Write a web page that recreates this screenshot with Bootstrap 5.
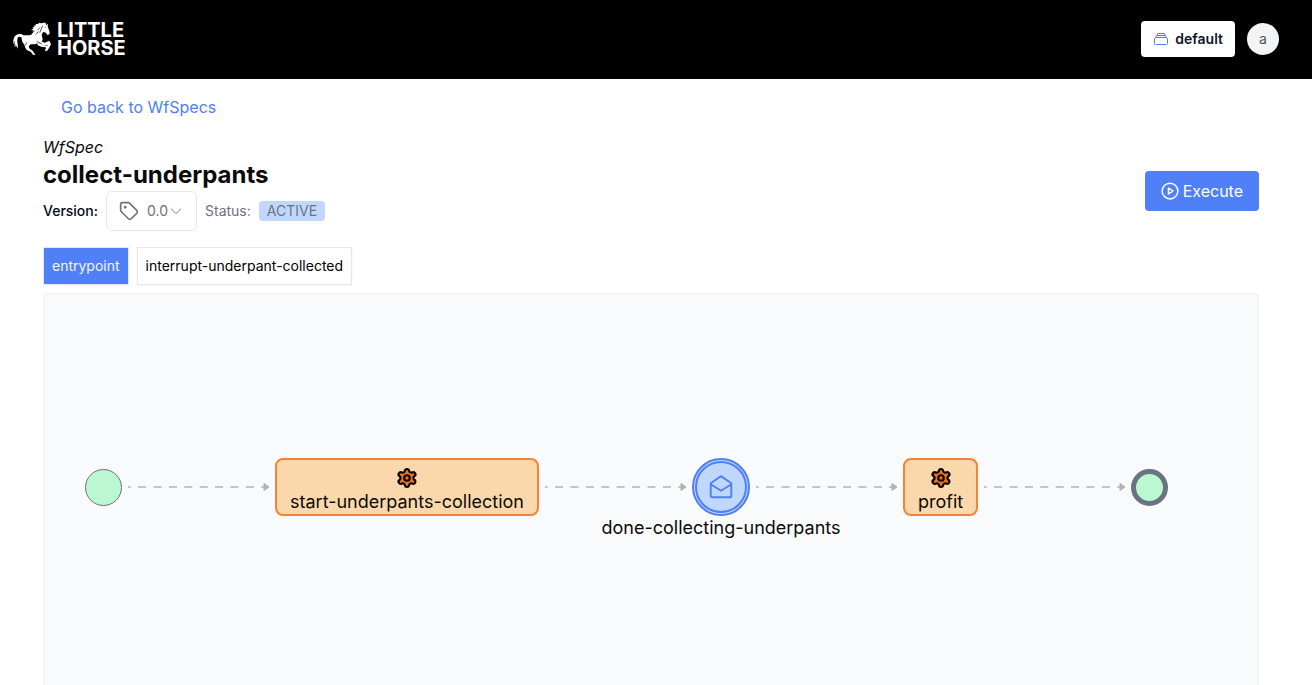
<!DOCTYPE html>
<html lang="en">
<head>
<meta charset="utf-8">
<meta name="viewport" content="width=device-width, initial-scale=1">
<title>collect-underpants | LittleHorse</title>
<link href="https://cdn.jsdelivr.net/npm/bootstrap@5.3.0/dist/css/bootstrap.min.css" rel="stylesheet">
<style>
  body { font-family: Inter, "Liberation Sans", sans-serif; font-size: 16px; line-height: 24px; color: #0a0a0a; }
  svg { flex: none; display: block; }
  .topbar { background: #000; padding: 20px 33px 21px 10px; }
  .brand { color: #fff; font-size: 20px; line-height: 18px; font-weight: 700; gap: 3px; }
  .brand:hover { color: #fff; }
  .account { gap: 12px; }
  .tenant { background: #fff; color: #0f172a; font-size: 14px; line-height: 20px; font-weight: 600; padding: 8px 12px; border: 0; border-radius: 4px; gap: 6px; }
  .tenant:hover { background: #f3f4f6; }
  .avatar { width: 32px; height: 32px; background: #f3f4f6; color: #4b5563; font-size: 14px; padding: 0; border: 0; }
  .page { padding: 16px 53px 0 43px; }
  .back-link { color: #4f80f7; padding-left: 18px; }
  .page-title { font-size: 24px; line-height: 32px; font-weight: 700; margin: 0; }
  .meta { font-size: 14px; line-height: 20px; color: #6b7280; }
  .version-label { color: #020817; font-weight: 500; }
  .version-box { height: 40px; border: 1px solid #e5e7eb; border-radius: 6px; padding: 0 12px; }
  .version-box select { appearance: none; border: 0; background: transparent; color: #6b7280; padding: 0; margin-left: 8px; font-size: 14px; outline: 0; }
  .status-tag { background: #c0d8ff; border-radius: 4px; padding: 0 8px; }
  .execute { background: #4f80f7; color: #fff; border: 0; border-radius: 4px; padding: 8px 16px; margin-bottom: 20px; gap: 4px; font-size: 16px; line-height: 24px; }
  .execute:hover { background: #3b6fe8; color: #fff; }
  .thread-tab { background: #fff; color: #000; border: 1px solid #e5e7eb; border-radius: 0; padding: 8px; font-size: 14px; line-height: 20px; box-shadow: 0 1px 2px #0000000d; }
  .thread-tab.active { background: #4f80f7; color: #f3f4f6; }
  .canvas { background: #f9fafc; border: 2px solid #f1f5f9; border-bottom: 0; border-radius: 4px 4px 0 0; padding: 163px 0 0 40px; }
  .flow-circle { width: 37px; height: 37px; background: #bbf7d0; border: 1px solid #6b7280; }
  .flow-circle.final { border-width: 5px; }
  .task { height: 58px; background: #fbd8ac; border: 2px solid #f5823a; border-radius: 8px; padding: 7px 13px 0; font-size: 18px; line-height: 22px; gap: 2px; }
  .event { width: 58px; height: 58px; background: #c0d8ff; border: 5px double #4f80f7; }
  .event-label { position: absolute; top: 100%; left: 50%; transform: translateX(-50%); margin-top: 5px; font-size: 18px; line-height: 24px; white-space: nowrap; }
</style>
</head>
<body class="vh-100 overflow-hidden d-flex flex-column">
<header class="topbar d-flex justify-content-between align-items-center">
  <a href="#" class="brand d-flex align-items-center text-decoration-none">
    <svg width="44" height="38" viewBox="0 0 132 114" fill="#fff" aria-hidden="true">
      <path d="M107 8L108 16L114 11L113 19L119 37L118 43L112 45L108 38L99 36L95 45L98 57L96 65L104 68L118 62L123 73L116 86L108 91L106 87L111 82L113 74L106 76L96 74L86 69L74 73L62 73L56 79L59 86L68 92L74 101L77 105L69 104L62 95L50 90L46 83L43 74L37 65L34 52C27 48 22 51 22 59C21 67 25 74 23 86C20 81 18 77 17 72C17 77 17 80 15 82C13 74 14 68 14 62C12 65 12 70 10 73C9 55 13 46 24 43C31 41 36 42 40 46C50 45 57 47 64 44C66 39 71 36 75 32L67 35L71 30L63 31L71 25L66 24L74 20L70 18L79 15L76 12L86 12L85 8L94 10L101 8z"/>
      <path d="M84 68l17 8 13 1 0 14-8 3-1-4 4-3-2-5-13-2-12-5z"/>
      <path d="M90 22l-8 9M98 17l-9 21M85 35l-8 9M50 67l-4 9M80 64l15 7M104 21l3 2" fill="none" stroke="#000" stroke-width="2"/>
    </svg>
    <span>LITTLE<br>HORSE</span>
  </a>
  <div class="account d-flex align-items-center">
    <button type="button" class="tenant btn d-flex align-items-center">
      <svg width="16" height="16" viewBox="0 0 16 16" fill="none" stroke="#4f80f7" stroke-width="1" aria-hidden="true"><path d="M2.500 6.500h11l1 1.500v4.500q0 1-1 1h-11q-1 0-1-1V8zM3 6.500V5q0-.5.5-.5h9q.5 0 .5.5v1.500M4.500 4.500V3q0-.5.5-.5h6q.5 0 .5.5v1.500"/></svg>
      default
    </button>
    <button type="button" class="avatar rounded-circle">a</button>
  </div>
</header>

<main class="page flex-grow-1 d-flex flex-column">
  <div class="mb-3"><a href="#" class="back-link text-decoration-none">Go back to WfSpecs</a></div>

  <div class="d-flex justify-content-between align-items-end mb-3">
    <div>
      <div class="fst-italic">WfSpec</div>
      <h1 class="page-title">collect-underpants</h1>
      <div class="meta d-flex align-items-center gap-2">
        <label class="version-label" for="version">Version:</label>
        <div class="version-box d-flex align-items-center">
          <svg width="20" height="20" viewBox="0 0 24 24" fill="none" stroke="#6b7280" stroke-width="2" stroke-linejoin="round" aria-hidden="true"><path d="M12.600 2.600A2 2 0 0 0 11.200 2H4a2 2 0 0 0-2 2v7.200a2 2 0 0 0 .6 1.400l8.700 8.700a2.400 2.400 0 0 0 3.400 0l6.600-6.600a2.400 2.400 0 0 0 0-3.400z"/><circle cx="7.500" cy="7.500" r=".7" fill="#6b7280"/></svg>
          <select id="version"><option>0.0</option></select>
          <svg width="16" height="16" viewBox="0 0 24 24" fill="none" stroke="#b5b8bf" stroke-width="2" stroke-linecap="round" stroke-linejoin="round" aria-hidden="true"><path d="M5 9l7 7 7-7"/></svg>
        </div>
        <span>Status:</span>
        <span class="status-tag">ACTIVE</span>
      </div>
    </div>
    <button type="button" class="execute btn d-flex align-items-center">
      <svg width="18" height="18" viewBox="0 0 24 24" fill="none" stroke="currentColor" stroke-width="2" stroke-linejoin="round" aria-hidden="true"><circle cx="12" cy="12" r="10.500"/><path d="M10 8l6 4-6 4z"/></svg>
      Execute
    </button>
  </div>

  <div class="d-flex gap-2 mb-2">
    <button type="button" class="thread-tab active">entrypoint</button>
    <button type="button" class="thread-tab">interrupt-underpant-collected</button>
  </div>

  <svg width="0" height="0" class="position-absolute" aria-hidden="true">
    <symbol id="edge" viewBox="0 0 153 10"><path d="M6 5H142" stroke="#b1b1b7" stroke-width="1.500" stroke-dasharray="8 7.400" stroke-dashoffset="5.300"/><path d="M142 1.500L147 5l-5 3.500z" fill="#b1b1b7" stroke="#b1b1b7" stroke-linejoin="round"/></symbol>
    <symbol id="gear" viewBox="0 0 24 24"><path d="M9.700 4.100a2.340 2.340 0 0 1 4.600 0 2.340 2.340 0 0 0 3.300 1.900 2.340 2.340 0 0 1 2.400 4.100 2.340 2.340 0 0 0 0 3.800 2.340 2.340 0 0 1-2.400 4.100 2.340 2.340 0 0 0-3.300 1.900 2.340 2.340 0 0 1-4.600 0 2.340 2.340 0 0 0-3.300-1.900 2.340 2.340 0 0 1-2.400-4.100 2.340 2.340 0 0 0 0-3.800 2.340 2.340 0 0 1 2.400-4.100 2.340 2.340 0 0 0 3.300-1.900z" fill="#f97316" stroke="#000" stroke-width="2.400" stroke-linejoin="round"/><circle cx="12" cy="12" r="3" fill="#f97316" stroke="#000" stroke-width="2.400"/></symbol>
  </svg>

  <section class="canvas flex-grow-1" aria-label="Workflow diagram">
    <div class="d-flex align-items-center">
      <div class="flow-circle rounded-circle flex-shrink-0"></div>
      <svg width="153" height="10"><use href="#edge"/></svg>
      <div class="task d-flex flex-column align-items-center flex-shrink-0">
        <svg width="24" height="22"><use href="#gear"/></svg>
        <span>start-underpants-collection</span>
      </div>
      <svg width="153" height="10"><use href="#edge"/></svg>
      <div class="event rounded-circle position-relative d-flex align-items-center justify-content-center flex-shrink-0">
        <svg width="26" height="26" viewBox="0 0 24 24" fill="none" stroke="#4f80f7" stroke-width="1.800" stroke-linejoin="round" stroke-linecap="round" aria-hidden="true"><path d="M21.500 8.500V20a1.500 1.500 0 0 1-1.500 1.500H4A1.500 1.500 0 0 1 2.500 20V8.500L12 2z M2.500 9.500L12 15.500l9.500-6"/></svg>
        <span class="event-label">done-collecting-underpants</span>
      </div>
      <svg width="153" height="10"><use href="#edge"/></svg>
      <div class="task d-flex flex-column align-items-center flex-shrink-0">
        <svg width="24" height="22"><use href="#gear"/></svg>
        <span>profit</span>
      </div>
      <svg width="153" height="10"><use href="#edge"/></svg>
      <div class="flow-circle final rounded-circle flex-shrink-0"></div>
    </div>
  </section>
</main>
<script src="https://cdn.jsdelivr.net/npm/bootstrap@5.3.0/dist/js/bootstrap.bundle.min.js"></script>
</body>
</html>
